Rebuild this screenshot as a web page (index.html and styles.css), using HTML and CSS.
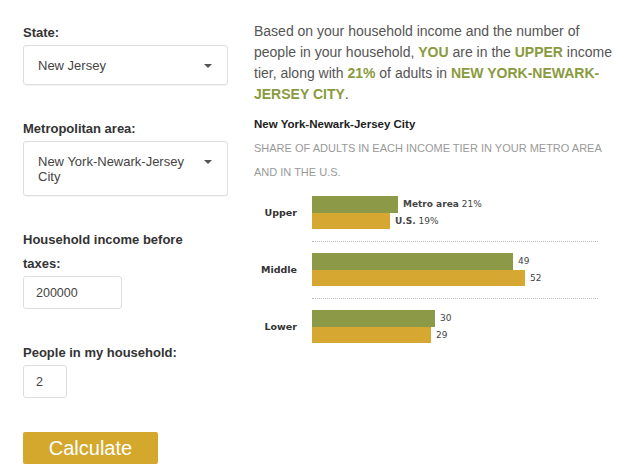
FILE: index.html
```html
<!DOCTYPE html>
<html>
<head>
    <title>Income Calculator</title>
    <link rel="stylesheet" href="styles.css">
</head>
<body>
    <div class="page">
        <div class="form-col">
            <div class="field">
                <label>State:</label>
                <div class="select-box">
                    <span class="select-text">New Jersey</span>
                    <span class="caret"></span>
                </div>
            </div>
            <div class="field">
                <label>Metropolitan area:</label>
                <div class="select-box">
                    <span class="select-text">New York-Newark-Jersey City</span>
                    <span class="caret"></span>
                </div>
            </div>
            <div class="field">
                <label for="income">Household income before taxes:</label>
                <input type="text" id="income" class="income-input" value="200000">
            </div>
            <div class="field">
                <label for="people">People in my household:</label>
                <input type="text" id="people" class="people-input" value="2">
            </div>
            <button type="button" class="calc-btn">Calculate</button>
        </div>

        <div class="result-col">
            <p class="summary">
                Based on your household income and the number of people in your household,
                <b>YOU</b> are in the <b>UPPER</b> income tier, along with <b>21%</b> of adults in
                <b>NEW YORK-NEWARK-JERSEY CITY</b>.
            </p>
            <h3 class="chart-title">New York-Newark-Jersey City</h3>
            <p class="chart-sub">SHARE OF ADULTS IN EACH INCOME TIER IN YOUR METRO AREA AND IN THE U.S.</p>

            <div class="chart">
                <div class="tier">
                    <div class="tier-label">Upper</div>
                    <div class="bars">
                        <div class="bar-row"><div class="bar metro" style="width: 86px"></div><span class="val"><b>Metro area</b> 21%</span></div>
                        <div class="bar-row"><div class="bar us" style="width: 78px"></div><span class="val"><b>U.S.</b> 19%</span></div>
                    </div>
                </div>
                <div class="sep"></div>
                <div class="tier">
                    <div class="tier-label">Middle</div>
                    <div class="bars">
                        <div class="bar-row"><div class="bar metro" style="width: 201px"></div><span class="val">49</span></div>
                        <div class="bar-row"><div class="bar us" style="width: 213px"></div><span class="val">52</span></div>
                    </div>
                </div>
                <div class="sep"></div>
                <div class="tier">
                    <div class="tier-label">Lower</div>
                    <div class="bars">
                        <div class="bar-row"><div class="bar metro" style="width: 123px"></div><span class="val">30</span></div>
                        <div class="bar-row"><div class="bar us" style="width: 119px"></div><span class="val">29</span></div>
                    </div>
                </div>
            </div>
        </div>
    </div>
</body>
</html>
```

FILE: styles.css
```css
body {
    font-family: "Liberation Sans", Arial, sans-serif;
    margin: 0;
    background-color: #ffffff;
    color: #333333;
}

.page {
    display: flex;
    gap: 26px;
    padding: 21px 0 0 23px;
}

.form-col {
    width: 205px;
    flex-shrink: 0;
}

.field {
    margin-bottom: 32px;
}

label {
    display: block;
    max-width: 180px;
    font-size: 13px;
    font-weight: bold;
    line-height: 24px;
    color: #333333;
}

.select-box {
    display: flex;
    align-items: flex-start;
    border: 1px solid #dddddd;
    border-radius: 3px;
    padding: 12px 15px 11px 14px;
    font-size: 13px;
    line-height: 15px;
    color: #444444;
    box-shadow: 0 1px 1px rgba(0, 0, 0, 0.04);
}

.select-text {
    flex: 1;
    padding-right: 12px;
}

.caret {
    width: 0;
    height: 0;
    margin-top: 6px;
    border-left: 4.5px solid transparent;
    border-right: 4.5px solid transparent;
    border-top: 4.5px solid #555555;
}

input[type="text"] {
    display: block;
    box-sizing: border-box;
    height: 33px;
    border: 1px solid #dddddd;
    border-radius: 3px;
    padding: 0 12px;
    font-family: "Liberation Sans", Arial, sans-serif;
    font-size: 12.5px;
    color: #444444;
}

.income-input {
    width: 99px;
}

.people-input {
    width: 44px;
}

.calc-btn {
    display: block;
    margin-top: 34px;
    width: 135px;
    height: 32px;
    border: none;
    border-radius: 2px;
    background-color: #d4a82d;
    color: #ffffff;
    font-family: "Liberation Sans", Arial, sans-serif;
    font-size: 20px;
    padding: 0;
    cursor: pointer;
}

.result-col {
    width: 362px;
}

.summary {
    margin: 0;
    font-size: 14px;
    line-height: 21px;
    color: #555555;
}

.summary b {
    color: #8a9a3e;
}

.chart-title {
    margin: 9px 0 0;
    font-size: 11.5px;
    line-height: 20px;
    color: #222222;
}

.chart-sub {
    margin: 2px 0 0;
    width: 356px;
    font-size: 11px;
    line-height: 24px;
    color: #999999;
}

.chart {
    margin-top: 12px;
    font-family: "DejaVu Sans", Verdana, sans-serif;
    font-size: 9px;
    color: #333333;
}

.tier {
    display: flex;
    align-items: center;
}

.tier-label {
    width: 58px;
    box-sizing: border-box;
    padding-right: 15px;
    text-align: right;
    font-weight: bold;
    font-size: 9.5px;
}

.bar-row {
    display: flex;
    align-items: center;
}

.bar {
    height: 16.5px;
}

.metro {
    background-color: #8c9a47;
}

.us {
    background-color: #d6a831;
}

.val {
    margin-left: 5px;
    color: #444444;
}

.sep {
    margin: 12px 0 11px 58px;
    width: 286px;
    border-top: 1px dotted #bbbbbb;
}
```
